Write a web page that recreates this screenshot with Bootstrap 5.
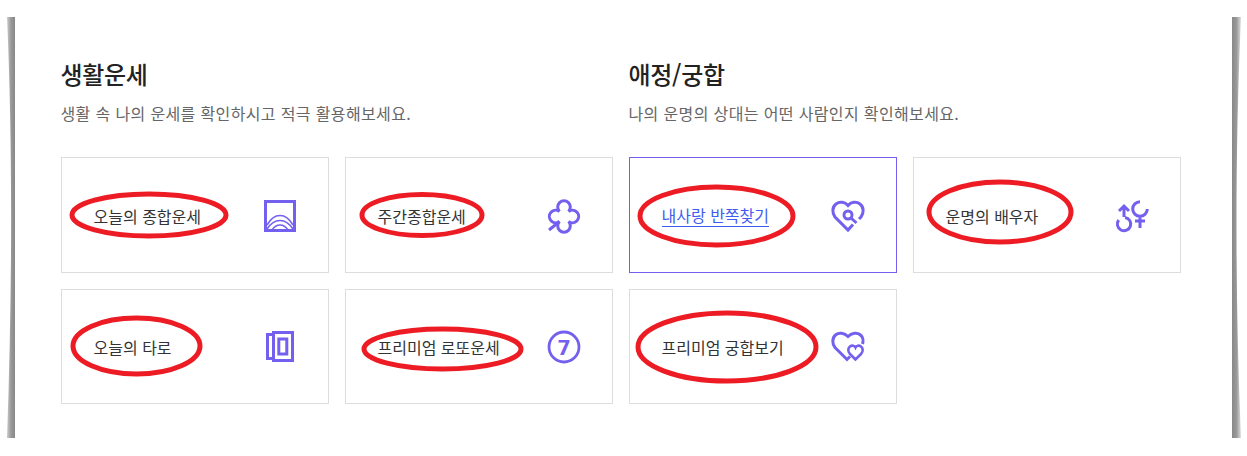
<!DOCTYPE html>
<html lang="ko">
<head>
    <meta charset="UTF-8">
    <title>운세</title>
    <link href="https://cdn.jsdelivr.net/npm/bootstrap@5.3.3/dist/css/bootstrap.min.css" rel="stylesheet">
    <style>
        html, body { height: 456px; overflow: hidden; background: #fff; }
        body { font-family: "Noto Sans CJK KR", "Liberation Sans", sans-serif; position: relative; }
        .fortune-wrap { padding: 56px 0 0 60.500px; gap: 16px; }
        .fortune-section { width: 552px; }
        .fortune-title { font-size: 24px; line-height: 36px; font-weight: 500; color: #222; letter-spacing: -.3px; margin: 0; }
        .fortune-desc { font-size: 16px; line-height: 22px; letter-spacing: .36px; color: #666; margin: 10px 0 33px; }
        .fortune-grid { display: grid; grid-template-columns: 268px 268px; grid-auto-rows: 115.5px; gap: 16px; }
        .fortune-item { border: 1px solid #ddd; padding: 2px 32px 0; color: #333; font-size: 16px; text-decoration: none; }
        .fortune-item.is-hover { border-color: #7360ee; }
        .fortune-item.is-hover span { color: #3f5df0; border-bottom: 1px solid #3f5df0; line-height: 22px; }
        .fortune-icon { width: 32px; height: 32px; flex: none; fill: none; stroke: #7360ee; stroke-width: 3; overflow: visible; }
        .fortune-num { fill: #7360ee; stroke: none; font-family: Roboto, "Liberation Sans", sans-serif; font-size: 21px; font-weight: 900; }
        .page-marks { position: absolute; left: 0; top: 0; pointer-events: none; }
    </style>
</head>
<body>
<div class="d-flex fortune-wrap">
    <!-- 생활운세 -->
    <section class="fortune-section">
        <h2 class="fortune-title">생활운세</h2>
        <p class="fortune-desc">생활 속 나의 운세를 확인하시고 적극 활용해보세요.</p>
        <div class="fortune-grid">
            <a class="fortune-item d-flex align-items-center justify-content-between" href="#">
                <span>오늘의 종합운세</span>
                <svg class="fortune-icon" viewBox="0 0 32 32">
                    <rect x="1.500" y="1.500" width="29" height="29"/>
                    <path d="M3 25C7 18 12 15.500 16 15.500s9 2.500 13 9.500M3 29C7 23 12 20.500 16 20.500s9 2.500 13 8.500M8 30c2-3 5-5 8-5s6 2 8 5" stroke-width="1.600"/>
                </svg>
            </a>
            <a class="fortune-item d-flex align-items-center justify-content-between" href="#">
                <span>주간종합운세</span>
                <svg class="fortune-icon" viewBox="0 0 32 32">
                    <path d="M11.500 11.500A6.300 6.300 0 1 1 20.500 11.500A6.300 6.300 0 1 1 20.500 21.500A6.300 6.300 0 1 1 11.500 21.500A6.300 6.300 0 1 1 11.500 11.500Z"/>
                    <path d="M1 30 11.500 21.500"/>
                </svg>
            </a>
            <a class="fortune-item d-flex align-items-center justify-content-between" href="#">
                <span>오늘의 타로</span>
                <svg class="fortune-icon" viewBox="0 0 32 32">
                    <path d="M9 3.500H3.500V27.500H9"/>
                    <rect x="9.500" y="1.500" width="19" height="28"/>
                    <rect x="14.800" y="8" width="8" height="15"/>
                </svg>
            </a>
            <a class="fortune-item d-flex align-items-center justify-content-between" href="#">
                <span>프리미엄 로또운세</span>
                <svg class="fortune-icon" viewBox="0 0 32 32">
                    <circle cx="16" cy="16" r="15" stroke-width="2.800"/>
                    <text class="fortune-num" x="16" y="23.500" text-anchor="middle">7</text>
                </svg>
            </a>
        </div>
    </section>

    <!-- 애정/궁합 -->
    <section class="fortune-section">
        <h2 class="fortune-title">애정/궁합</h2>
        <p class="fortune-desc">나의 운명의 상대는 어떤 사람인지 확인해보세요.</p>
        <div class="fortune-grid">
            <a class="fortune-item is-hover d-flex align-items-center justify-content-between" href="#">
                <span>내사랑 반쪽찾기</span>
                <svg class="fortune-icon" viewBox="0 0 32 32">
                    <path d="M21 24.500 16 30 3 17C0 13 0 7 4 4 8 1 13 2 16 5.500 19 2 24 1 28 4 32 7 32 13 29 17L27 19"/>
                    <circle cx="16" cy="15" r="4"/>
                    <path d="M19 18 24.500 23"/>
                </svg>
            </a>
            <a class="fortune-item d-flex align-items-center justify-content-between" href="#">
                <span>운명의 배우자</span>
                <svg class="fortune-icon" viewBox="0 0 32 32">
                    <path d="M9 17.400A6.700 6.700 0 1 1 2.700 20M8 17V6M3 11 8 6 13 11"/>
                    <path d="M24 1.700A7.300 7.300 0 1 0 31.300 9M24 16.500V28M19 21H29"/>
                </svg>
            </a>
            <a class="fortune-item d-flex align-items-center justify-content-between" href="#">
                <span>프리미엄 궁합보기</span>
                <svg class="fortune-icon" viewBox="0 0 32 32">
                    <path d="M18 25.500 15 28.500 3 16.500C0 13 0 7 3.500 4 7 1 12.500 2 16 5.500 19.500 2 25 1 28.500 4 31 6 31.500 10 30.500 13"/>
                    <path d="M23.500 28.500 18 23C15.500 20.500 16 17 18 15.500 20 14 22.500 14.500 23.500 16.500 24.500 14.500 27 14 29 15.500 31 17 31.500 20.500 29 23Z" stroke-width="2.600"/>
                </svg>
            </a>
        </div>
    </section>
</div>

<!-- 캡처 위에 그려진 표시 -->
<svg class="page-marks" width="1247" height="456" viewBox="0 0 1247 456">
    <defs>
        <linearGradient id="edgeL" x1="0" x2="1" y1="0" y2="0">
            <stop offset="0" stop-color="#ccc"/>
            <stop offset=".5" stop-color="#999"/>
            <stop offset="1" stop-color="#888"/>
        </linearGradient>
        <linearGradient id="edgeR" x1="0" x2="1" y1="0" y2="0">
            <stop offset="0" stop-color="#888"/>
            <stop offset=".5" stop-color="#999"/>
            <stop offset="1" stop-color="#ddd"/>
        </linearGradient>
    </defs>
    <path d="M7 17H15V438H7C12 300 13 150 7 17Z" fill="url(#edgeL)"/>
    <path d="M1232 17H1241C1235 150 1235 300 1241 438H1232Z" fill="url(#edgeR)"/>
    <g fill="none" stroke="#ed1c24" stroke-width="5">
        <ellipse cx="149" cy="215" rx="77" ry="21"/>
        <ellipse cx="422" cy="215" rx="60" ry="20.500"/>
        <ellipse cx="136.500" cy="346" rx="63.500" ry="28"/>
        <ellipse cx="442.500" cy="349" rx="78.500" ry="20"/>
        <ellipse cx="716.500" cy="216" rx="76.500" ry="29"/>
        <ellipse cx="1000" cy="212" rx="71" ry="30"/>
        <ellipse cx="727" cy="347" rx="89" ry="34"/>
    </g>
</svg>

<script src="https://cdn.jsdelivr.net/npm/bootstrap@5.3.3/dist/js/bootstrap.bundle.min.js"></script>
</body>
</html>
